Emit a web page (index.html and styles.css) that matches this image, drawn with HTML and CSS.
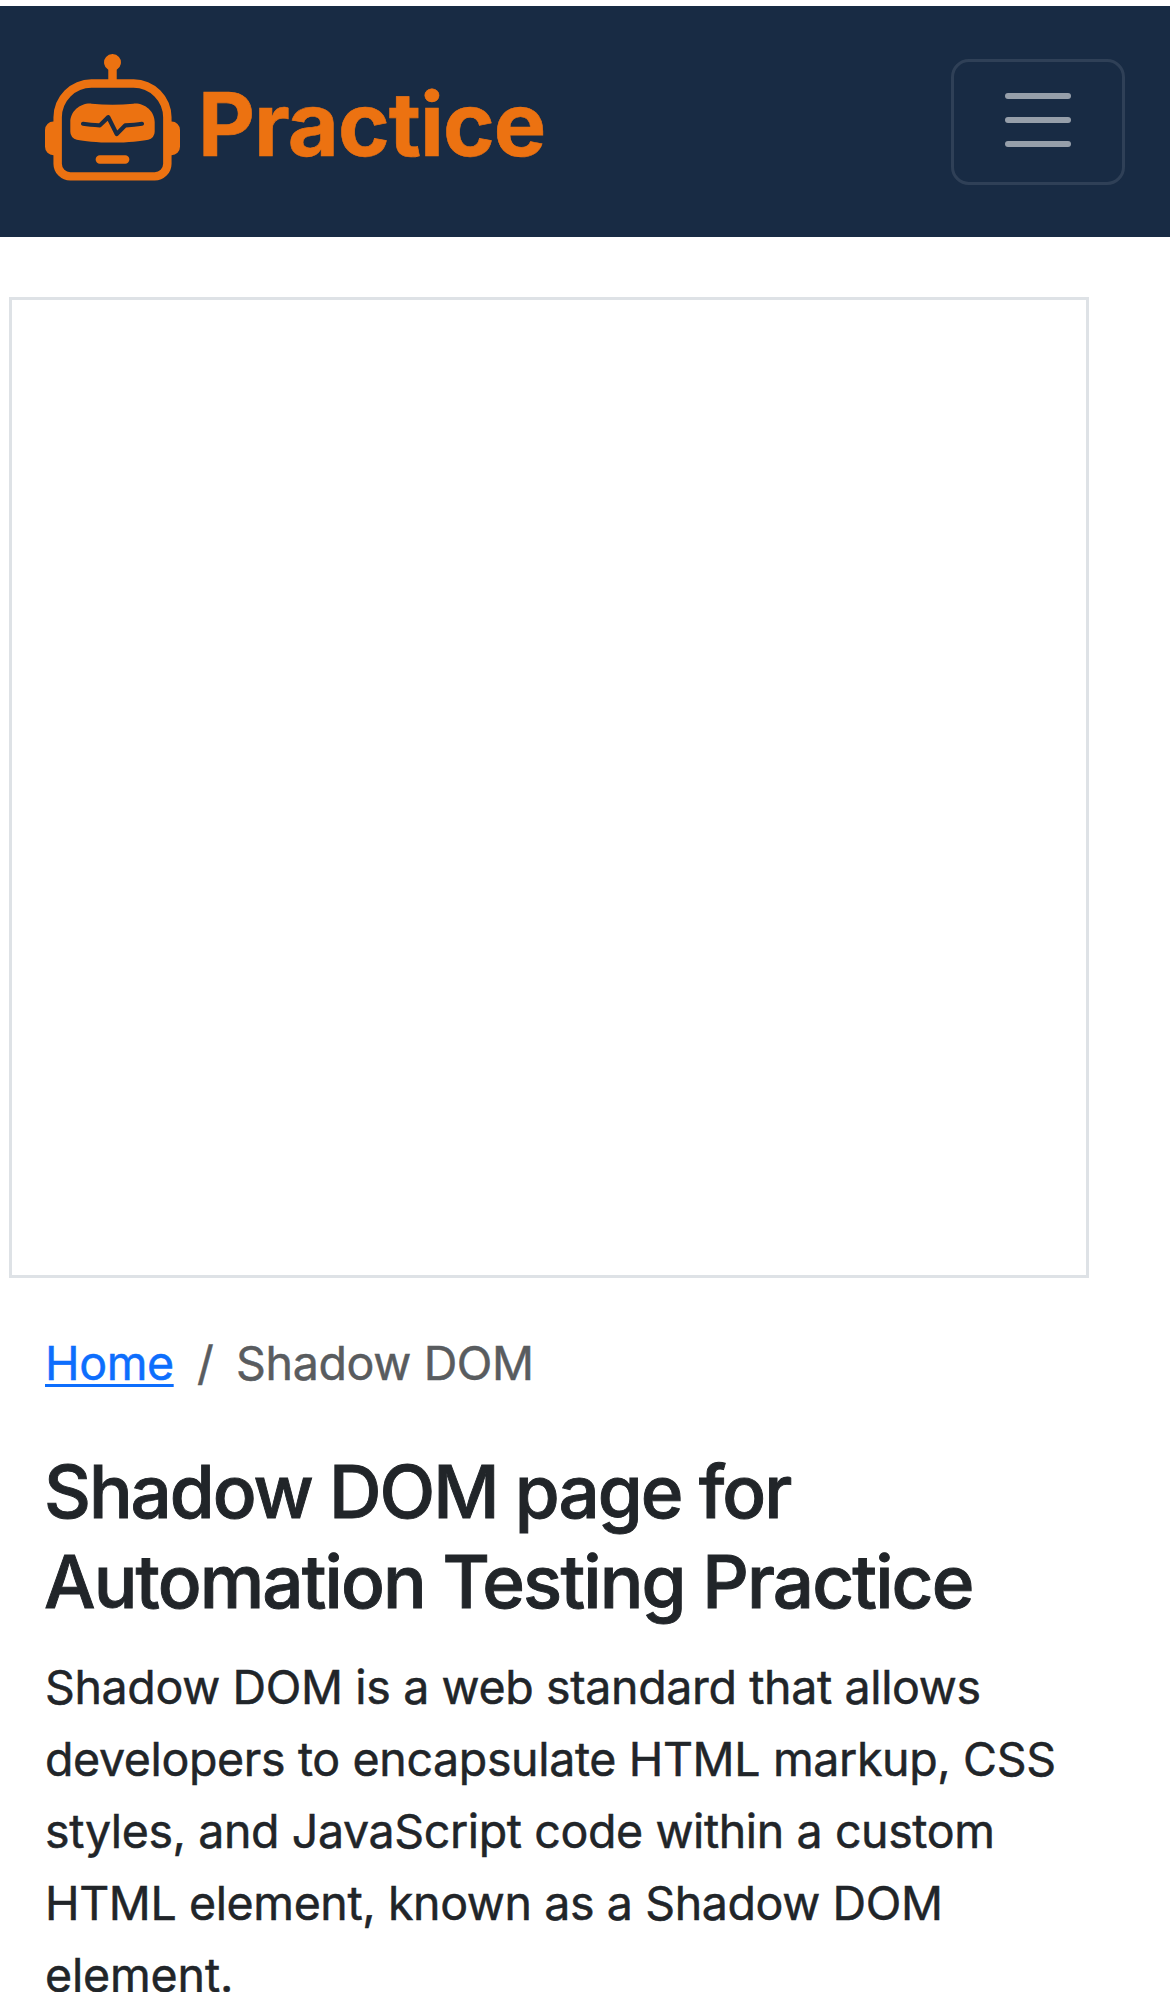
FILE: index.html
```html
<!DOCTYPE html>
<html lang="en">
<head>
<meta charset="utf-8">
<title>Shadow DOM</title>
<link rel="stylesheet" href="styles.css">
</head>
<body>
<nav class="navbar">
  <a class="brand">
    <svg class="brand-icon" viewBox="0 0 16 16" fill="currentColor" aria-hidden="true">
      <path d="M6 12.5a.5.5 0 0 1 .5-.5h3a.5.5 0 0 1 0 1h-3a.5.5 0 0 1-.5-.5M3 8.062C3 6.76 4.235 5.765 5.53 5.886a26.6 26.6 0 0 0 4.94 0C11.765 5.765 13 6.76 13 8.062v1.157a.93.93 0 0 1-.765.935c-.845.147-2.34.346-4.235.346s-3.39-.2-4.235-.346A.93.93 0 0 1 3 9.219zm4.542-.827a.25.25 0 0 0-.217.068l-.92.9a25 25 0 0 1-1.871-.183.25.25 0 0 0-.068.495c.55.076 1.232.149 2.02.193a.25.25 0 0 0 .189-.071l.754-.736.847 1.71a.25.25 0 0 0 .404.062l.932-.97a25 25 0 0 0 1.922-.188.25.25 0 0 0-.068-.495c-.538.074-1.207.145-1.98.189a.25.25 0 0 0-.166.076l-.754.785-.842-1.7a.25.25 0 0 0-.182-.135"/>
      <path d="M8.5 1.866a1 1 0 1 0-1 0V3h-2A4.5 4.5 0 0 0 1 7.5V8a1 1 0 0 0-1 1v2a1 1 0 0 0 1 1v1a2 2 0 0 0 2 2h10a2 2 0 0 0 2-2v-1a1 1 0 0 0 1-1V9a1 1 0 0 0-1-1v-.5A4.5 4.5 0 0 0 10.5 3h-2zM14 7.5V13a1 1 0 0 1-1 1H3a1 1 0 0 1-1-1V7.5A3.5 3.5 0 0 1 5.5 4h5A3.5 3.5 0 0 1 14 7.5"/>
    </svg>
    <span class="brand-name">Practice</span>
  </a>
  <button class="toggler" aria-label="Toggle navigation">
    <span class="bar"></span><span class="bar"></span><span class="bar"></span>
  </button>
</nav>
<div class="ad-frame"></div>
<main class="content">
  <ol class="breadcrumb">
    <li><a class="home" href="#">Home</a></li>
    <li class="slash">/</li>
    <li class="current">Shadow DOM</li>
  </ol>
  <h1 class="title">Shadow DOM page for<br><span class="title-end">Automation Testing Practice</span></h1>
  <p class="lead">Shadow DOM is a web standard that allows<br>developers to encapsulate HTML markup, CSS<br><span class="lead-mid">styles, and JavaScript code within a custom<br>HTML element, known as a Shadow DOM</span><br><span class="lead-end">element.</span></p>
</main>
</body>
</html>
```
FILE: styles.css
```css
* { box-sizing: border-box; }

html { overflow: hidden; }

body {
  margin: 0;
  padding-top: 6px;
  height: 1992px;
  overflow: hidden;
  background: #fff;
  color: #212529;
  font: 400 46.5px/72px Inter, "Liberation Sans", sans-serif;
}

.navbar {
  display: flex;
  justify-content: space-between;
  align-items: flex-start;
  height: 231px;
  padding: 48px 45px 0;
  background: #182b44;
}

.brand {
  display: flex;
  gap: 18px;
  color: #ec7211;
}

.brand-icon {
  display: block;
  width: 135px;
  height: 135px;
}

.brand-name {
  padding-top: 3px;
  font-size: 88px;
  font-weight: 700;
  line-height: 135px;
  letter-spacing: -.95px;
  -webkit-text-stroke: .6px currentColor;
}

.toggler {
  display: flex;
  flex-direction: column;
  align-items: center;
  gap: 18px;
  width: 174px;
  height: 126px;
  margin: 5px 0 0;
  padding: 31px 0 0;
  border: 3px solid rgba(255, 255, 255, .1);
  border-radius: 18px;
  background: transparent;
}

.bar {
  width: 66px;
  height: 6px;
  border-radius: 3px;
  background: rgba(255, 255, 255, .55);
}

.ad-frame {
  width: 1080px;
  height: 981px;
  margin: 60px 0 0 9px;
  border: 3px solid #dee2e6;
}

.content {
  padding: 49px 45px 0;
  -webkit-text-stroke: .5px currentColor;
}

.breadcrumb {
  display: flex;
  margin: 0 0 48px;
  padding: 0;
  list-style: none;
}

.home {
  display: block;
  width: 129px;
  color: #0d6efd;
  letter-spacing: -.4px;
  text-decoration: underline;
  text-decoration-thickness: 3px;
  text-underline-offset: 4px;
  text-decoration-skip-ink: none;
}

.slash {
  width: 62px;
  padding-left: 1px;
  text-align: center;
  color: #595c5f;
}

.current {
  color: #595c5f;
  letter-spacing: -.35px;
}

.title {
  margin: 0 0 24px -1px;
  font-size: 72.7px;
  font-weight: 500;
  line-height: 90px;
  letter-spacing: -2.03px;
  white-space: nowrap;
  -webkit-text-stroke: .9px currentColor;
}

.title-end { letter-spacing: -1.88px; }

.lead {
  margin: 0;
  letter-spacing: -.36px;
  white-space: nowrap;
}

.lead-mid { letter-spacing: -.39px; }

.lead-end { letter-spacing: -.15px; }
```
